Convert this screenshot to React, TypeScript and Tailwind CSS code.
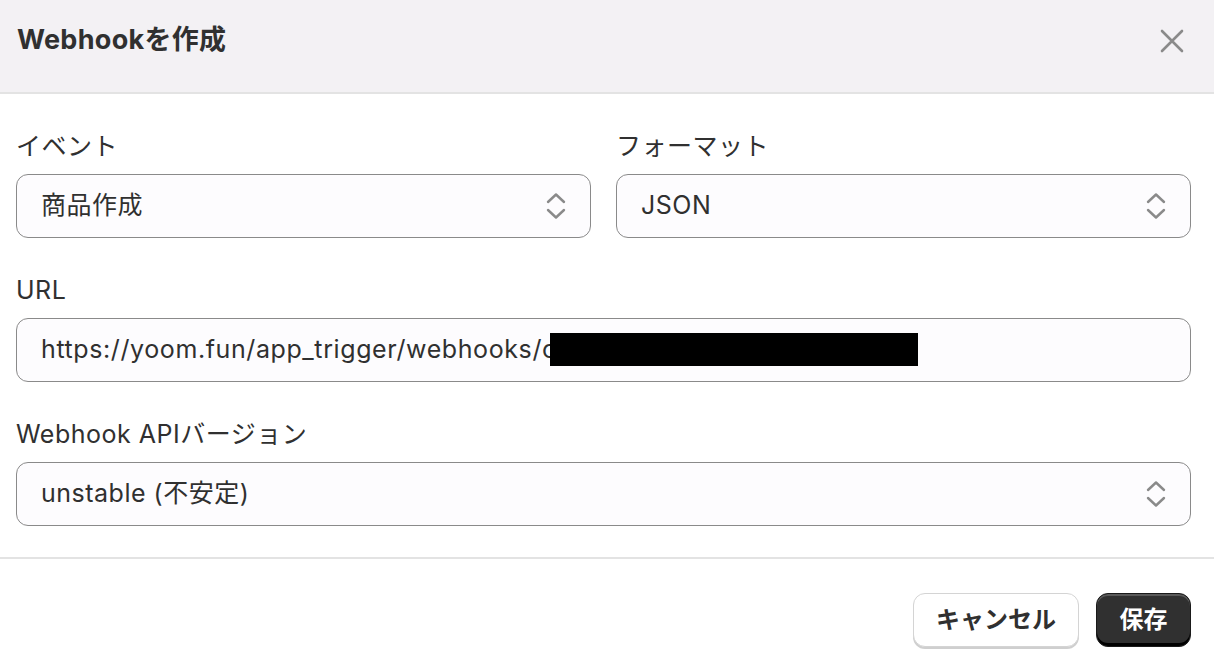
import React from 'react'

const FONT = "font-['Inter','Noto_Sans_CJK_JP',sans-serif]"

function Chevrons() {
  return (
    <svg width="20" height="28" viewBox="0 0 20 28" fill="none" stroke="#8a8a8a" strokeWidth="2.4" strokeLinecap="round" strokeLinejoin="round">
      <path d="M2 10 L10 2.5 L18 10" />
      <path d="M2 18 L10 25.5 L18 18" />
    </svg>
  )
}

function Field({ label, children }: { label: string; children: React.ReactNode }) {
  return (
    <div className="flex flex-col">
      <label className="text-[25px] leading-[32px] tracking-[0.5px] text-[#303030] mb-[12px]">{label}</label>
      {children}
    </div>
  )
}

function Select({ value }: { value: string }) {
  return (
    <div className="h-[64px] rounded-[12px] border border-[#8a8a8a] bg-[#fdfcfe] flex items-center justify-between pl-[24px] pr-[24px]">
      <span className="text-[25px] tracking-[0.5px] text-[#303030]">{value}</span>
      <Chevrons />
    </div>
  )
}

export default function App() {
  return (
    <div className={`${FONT} w-[1214px] h-[652px] bg-white overflow-hidden`}>
      {/* header */}
      <div className="h-[94px] bg-[#f3f1f4] border-b-2 border-[#e3e3e3] flex items-center justify-between pl-[17px] pr-[30px] pb-[12px]">
        <h1 className="text-[27px] font-bold text-[#303030] tracking-[0.3px]">Webhookを作成</h1>
        <svg width="24" height="24" viewBox="0 0 24 24" stroke="#8a8a8a" strokeWidth="2.6" strokeLinecap="round" className="mt-[2px]">
          <path d="M2 2 L22 22 M22 2 L2 22" />
        </svg>
      </div>

      {/* body */}
      <div className="pl-4 pr-[23px] pt-[36px] pb-[31px] flex flex-col gap-[36px] border-b-2 border-[#e3e3e3]">
        <div className="grid grid-cols-2 gap-[25px]">
          <Field label="イベント">
            <Select value="商品作成" />
          </Field>
          <Field label="フォーマット">
            <Select value="JSON" />
          </Field>
        </div>

        <Field label="URL">
          <div className="relative h-[64px] rounded-[12px] border border-[#8a8a8a] bg-[#fdfcfe] flex items-center pl-[24px]">
            <span className="text-[25px] tracking-[0.6px] text-[#303030]">https://yoom.fun/app_trigger/webhooks/c</span>
            <div className="absolute left-[533px] top-[14px] w-[368px] h-[33px] bg-black" />
          </div>
        </Field>

        <Field label="Webhook APIバージョン">
          <Select value="unstable (不安定)" />
        </Field>
      </div>

      {/* footer */}
      <div className="flex justify-end gap-[17px] pr-[23px] pt-[34px]">
        <button className="h-[54px] w-[166px] rounded-[12px] bg-white border border-[#d4d4d4] shadow-[0_2px_0_#cfcfcf] text-[24px] font-semibold text-[#303030]">
          キャンセル
        </button>
        <button className="h-[54px] w-[95px] rounded-[12px] bg-[#303030] border border-[#1a1a1a] shadow-[inset_0_2px_0_rgba(255,255,255,0.2),inset_0_-3px_0_#000] text-[24px] font-semibold text-white">
          保存
        </button>
      </div>
    </div>
  )
}
